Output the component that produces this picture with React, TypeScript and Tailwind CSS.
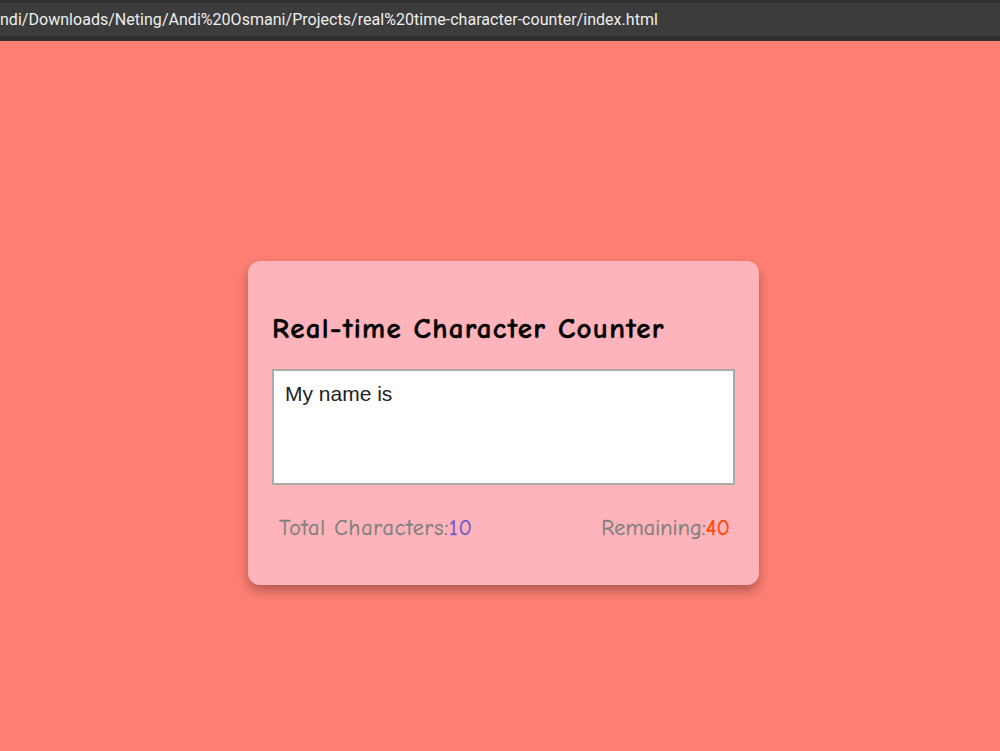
export default function App() {
  const comic = "font-['Comic_Sans_MS','Comic_Neue',Lato,sans-serif]";
  return (
    <div className="flex h-[751px] w-[1000px] flex-col overflow-hidden bg-[#ff7f73]">
      <header className="flex h-[41px] flex-col bg-[#2f2f2f] pt-[3px] pb-[5px]">
        <div className="flex h-[33px] items-center overflow-hidden bg-[#3c3c3c]">
          <span className="whitespace-nowrap font-['Roboto',sans-serif] text-[16px] tracking-[0.03px] text-[#eeeeee]">
            ndi/Downloads/Neting/Andi%20Osmani/Projects/real%20time-character-counter/index.html
          </span>
        </div>
      </header>
      <main className="pt-[220px] pl-[248px]">
        <section className="flex h-[324px] w-[511px] flex-col rounded-[12px] bg-[#ffb3ba] px-[24px] pt-[48px] shadow-[0_6px_12px_rgba(0,0,0,0.3)]">
          <h1 className={`${comic} text-[29px] leading-[40px] font-bold tracking-[1.27px] text-black [-webkit-text-stroke:0.4px_black]`}>
            Real-time Character Counter
          </h1>
          <textarea
            readOnly
            value="My name is"
            className="mt-[20px] h-[116px] w-[463px] resize-none border-2 border-[#aaaaaa] bg-white px-[11px] py-[11px] font-['Liberation_Sans',sans-serif] text-[21px] leading-[24px] text-[#222222] outline-none"
          />
          <div className={`${comic} mt-[28px] flex justify-between pr-[5px] pl-[7px] text-[22px] leading-[30px] font-medium text-[#808080] [-webkit-text-stroke:0.35px]`}>
            <p className="tracking-[0.85px]">Total Characters:<span className="text-[#6a5acd]">10</span></p>
            <p className="tracking-[0.1px]">Remaining:<span className="text-[#ff4500]">40</span></p>
          </div>
        </section>
      </main>
    </div>
  );
}
